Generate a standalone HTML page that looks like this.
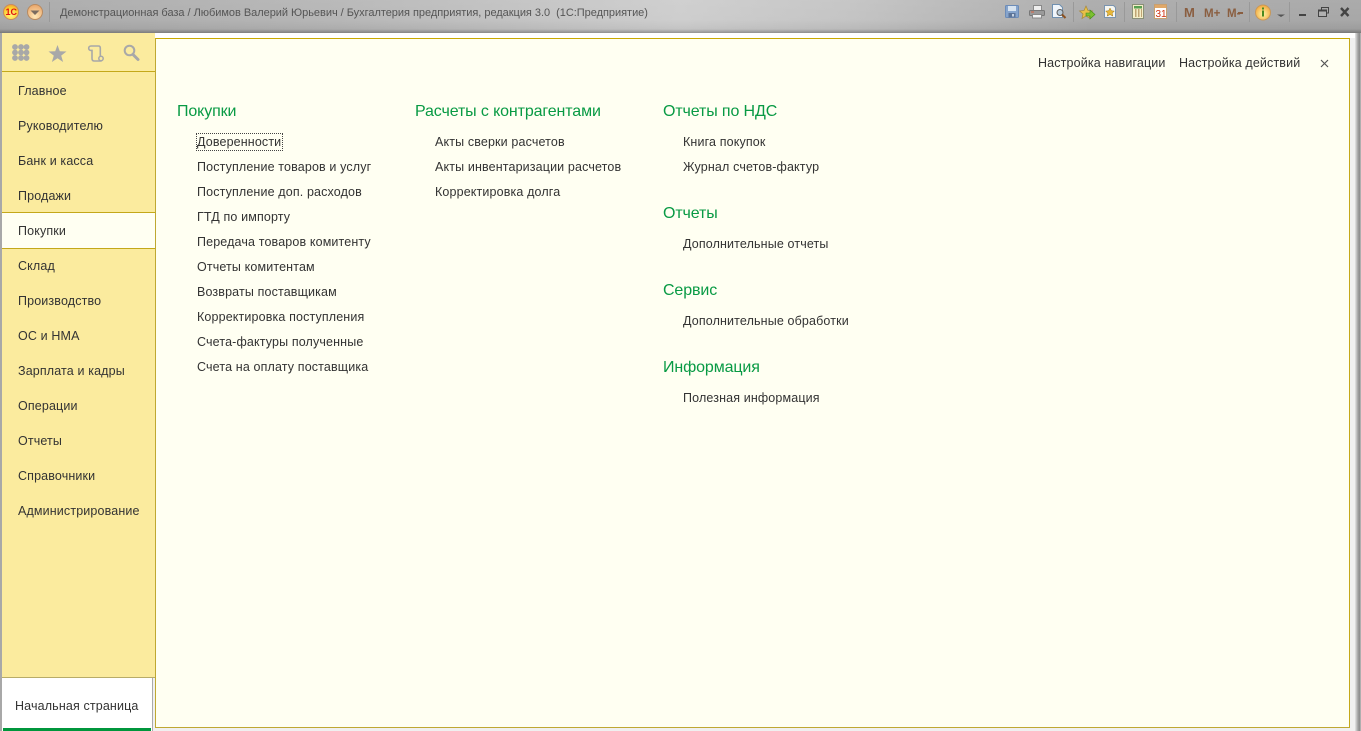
<!DOCTYPE html>
<html lang="ru"><head><meta charset="utf-8"><title>1С</title>
<style>
html,body{margin:0;padding:0;width:1361px;height:731px;overflow:hidden;background:#f0f0f0;font-family:"Liberation Sans",Arial,sans-serif}
.a{position:absolute;white-space:nowrap}
#top{left:0;top:0;width:1361px;height:33px;background:linear-gradient(90deg,#a6a6a6 0,#b4b4b4 25%,#cccccc 50%,#c2c2c2 62%,#a8a8a8 80%,#a4a4a4 100%)}
#topc{left:0;top:0;width:1361px;height:33px;background:linear-gradient(180deg,rgba(255,255,255,.08) 0,rgba(255,255,255,.04) 20px,rgba(0,0,0,.04) 29px,rgba(0,0,0,.28) 33px)}
#title{left:60px;top:6px;font-size:11px;line-height:14px;color:#555;letter-spacing:-.03px}
#lb{left:0;top:33px;width:2px;height:698px;background:#a8a8a8}
#rb{left:1355px;top:33px;width:6px;height:698px;background:linear-gradient(90deg,#e6e6e6,#a0a0a0 50%,#8c8c8c 80%,#c8c8c8)}
#white{left:155px;top:33px;width:1200px;height:5px;background:#fff}
#side{left:2px;top:33px;width:153px;height:644px;background:#fbeb9e;border-bottom:1px solid #b8ac68}
#sl{left:2px;top:71px;width:153px;height:1px;background:#c4a81a}
#act{left:2px;top:212px;width:153px;height:35px;background:#fffff2;border-top:1px solid #c4a81a;border-bottom:1px solid #c4a81a}
.n{left:18px;font-size:12.5px;line-height:16px;color:#333;letter-spacing:.14px}
#main{left:155px;top:38px;width:1193px;height:688px;background:#fffff2;border:1px solid #bfa832;border-top-color:#c8a800;border-right-color:#c4a81a}
#tab{left:2px;top:678px;width:150px;height:53px;background:#fff;border-right:1px solid #aaa}
#grn{left:3px;top:728px;width:148px;height:3px;background:#00963c}
.h{font-size:16px;line-height:20px;color:#089a44;letter-spacing:-.12px}
.l{font-size:12.5px;line-height:16px;color:#333;letter-spacing:.14px}
svg{position:absolute;overflow:visible}
</style></head><body>
<div class="a" id="top"></div><div class="a" id="topc"></div>
<div class="a" id="lb"></div><div class="a" id="rb"></div><div class="a" id="white"></div>
<div class="a" id="side"></div><div class="a" id="sl"></div>
<div class="a" id="main"></div><div class="a" id="act"></div>
<div class="a" id="tab"></div><div class="a" id="grn"></div>

<div class="a" id="title">Демонстрационная база / Любимов Валерий Юрьевич / Бухгалтерия предприятия, редакция 3.0&nbsp; (1С:Предприятие)</div>

<svg style="left:0;top:0" width="1361" height="33" viewBox="0 0 1361 33">
<defs>
<radialGradient id="y" cx=".5" cy=".7" r=".7"><stop offset="0" stop-color="#fff680"/><stop offset=".7" stop-color="#fcd030"/><stop offset="1" stop-color="#f0a030"/></radialGradient>
<radialGradient id="o" cx=".5" cy=".8" r=".8"><stop offset="0" stop-color="#ffe8b8"/><stop offset="1" stop-color="#e8a468"/></radialGradient>
<radialGradient id="i" cx=".5" cy=".6" r=".7"><stop offset="0" stop-color="#fff4a8"/><stop offset="1" stop-color="#f09a28"/></radialGradient>
</defs>
<circle cx="11" cy="12" r="7.500" fill="url(#y)" stroke="#c88a60"/>
<text x="5.500" y="15" font-family="Liberation Sans" font-size="9" font-weight="bold" fill="#e01010">1С</text>
<circle cx="35" cy="12" r="7.500" fill="url(#o)" stroke="#b88a60"/>
<path d="M30.500 10.500h9l-4.500 4.500z" fill="#7a6c60"/>
<rect x="49" y="2" width="1" height="20" fill="#999"/>
<!-- save -->
<rect x="1005.500" y="5.500" width="13" height="12" rx="1" fill="#86a4cc" stroke="#6c8cb8"/><rect x="1008" y="6" width="8" height="5" fill="#d8e4f0"/><rect x="1008.500" y="13" width="7" height="4.500" fill="#5c7498"/><rect x="1012" y="14" width="2" height="2.500" fill="#c8d4e4"/>
<!-- print -->
<rect x="1033.500" y="5.500" width="8" height="5" fill="#eeeeee" stroke="#8a8a8a"/><rect x="1029.500" y="10.500" width="15" height="5" rx="1" fill="#9a9a9a" stroke="#777"/><rect x="1032.500" y="14.500" width="9" height="3.500" fill="#f4f4f4" stroke="#888"/><rect x="1031" y="11.500" width="3" height="1" fill="#d86040"/>
<!-- preview -->
<path d="M1052.500 4.500h7l3 3v10h-10z" fill="#f0f5fa" stroke="#7090b0"/><circle cx="1060" cy="12.500" r="3" fill="#b8cad8" stroke="#5c5c5c"/><path d="M1062 14.500l3.500 3.500" stroke="#8a5020" stroke-width="2"/>
<rect x="1073" y="2" width="1" height="20" fill="#999"/>
<!-- fav go -->
<path d="M1086 6l2 4.500 4.500.5-3.500 3 1 4.500-4-2.500-4 2.500 1-4.500-3.500-3 4.500-.5z" fill="#e8c048" stroke="#a88838" stroke-width=".7"/><path d="M1086 13h4v-3l5 4.500-5 4.500v-3h-4z" fill="#7cc030" stroke="#408a18" stroke-width=".6"/>
<!-- fav doc -->
<path d="M1104.500 5.500h9l2 2v10h-11z" fill="#f6f6f0" stroke="#7a94b0"/><path d="M1110 8l1.400 2.800 3 .3-2.200 2 .6 3-2.800-1.500-2.800 1.500.6-3-2.200-2 3-.3z" fill="#e8b838" stroke="#a07820" stroke-width=".5"/>
<rect x="1124" y="2" width="1" height="20" fill="#999"/>
<!-- calc -->
<rect x="1132.500" y="4.500" width="11" height="14" fill="#f4eec8" stroke="#8a9078"/><rect x="1134" y="6" width="8" height="2.500" fill="#58a050"/><path d="M1135 10h1.500M1138 10h1.500M1141 10h1M1135 12h1.500M1138 12h1.500M1141 12h1M1135 14h1.500M1138 14h1.500M1141 14h1M1135 16h1.500M1138 16h1.500M1141 16h1" stroke="#8a5a20"/>
<!-- calendar -->
<rect x="1154.500" y="4.500" width="12" height="14" fill="#fff" stroke="#c8a070"/><rect x="1155" y="5" width="11" height="3" fill="#e0a868"/><text x="1155.500" y="17" font-family="Liberation Sans" font-size="10" fill="#d03010">31</text>
<rect x="1176" y="2" width="1" height="20" fill="#999"/>
<text x="1184" y="17" font-family="Liberation Sans" font-size="13" font-weight="bold" fill="#8a5e40">M</text>
<text x="1204" y="17" font-family="Liberation Sans" font-size="11.500" font-weight="bold" fill="#8a5e40">M+</text>
<text x="1227" y="17" font-family="Liberation Sans" font-size="11.500" font-weight="bold" fill="#8a5e40">M-</text>
<rect x="1238" y="12" width="5" height="2" fill="#8a5e40"/>
<rect x="1249" y="2" width="1" height="20" fill="#999"/>
<circle cx="1263" cy="12.500" r="7.500" fill="url(#i)" stroke="#c89858"/>
<rect x="1262" y="7.500" width="2" height="2" fill="#4a8a20"/><rect x="1262" y="10.500" width="2" height="6" fill="#4a8a20"/>
<path d="M1277 14.500h8l-4 2.500z" fill="#555"/>
<rect x="1289" y="2" width="1" height="20" fill="#999"/>
<rect x="1299" y="14" width="7" height="2" fill="#444"/>
<rect x="1321.500" y="7.500" width="7" height="5.500" fill="none" stroke="#444"/><rect x="1318.500" y="10" width="8" height="6.500" fill="#b0b0b0" stroke="#444"/><rect x="1318" y="9.500" width="9" height="2" fill="#444"/>
<path d="M1341 8l7.500 8M1348.500 8l-7.500 8" stroke="#444" stroke-width="2.400"/>
</svg>

<svg style="left:0;top:34px" width="156" height="38" viewBox="0 34 156 38">
<g fill="#a8a8a8"><circle cx="15" cy="47" r="2.900"/><circle cx="21" cy="47" r="2.900"/><circle cx="26.500" cy="47" r="2.900"/><circle cx="15" cy="52.500" r="2.900"/><circle cx="21" cy="52.500" r="2.900"/><circle cx="26.500" cy="52.500" r="2.900"/><circle cx="15" cy="58" r="2.900"/><circle cx="21" cy="58" r="2.900"/><circle cx="26.500" cy="58" r="2.900"/></g>
<path d="M57.500 45l2.300 6.300 6.700.2-5.300 4.100 1.900 6.400-5.600-3.800-5.600 3.800 1.900-6.400-5.300-4.100 6.700-.2z" fill="#a8a8a8"/>
<path d="M91 46h7.500c1.200 0 1.800.8 1.800 2v9M91 46c-1.500 0-2.300 1-2.300 2.200s.9 2.200 2.300 2.200h1v8c0 1.800 1 2.600 2.300 2.600h7.300" fill="none" stroke="#a8a8a8" stroke-width="1.600"/><circle cx="101" cy="58.500" r="2.200" fill="none" stroke="#a8a8a8" stroke-width="1.500"/>
<circle cx="129.500" cy="50.500" r="4.800" fill="none" stroke="#a8a8a8" stroke-width="2"/><path d="M133 54.500l5 5" stroke="#a8a8a8" stroke-width="3" stroke-linecap="round"/>
</svg>

<div class="a n" style="top:83px">Главное</div>
<div class="a n" style="top:118px">Руководителю</div>
<div class="a n" style="top:153px">Банк и касса</div>
<div class="a n" style="top:188px">Продажи</div>
<div class="a n" style="top:223px">Покупки</div>
<div class="a n" style="top:258px">Склад</div>
<div class="a n" style="top:293px">Производство</div>
<div class="a n" style="top:328px">ОС и НМА</div>
<div class="a n" style="top:363px">Зарплата и кадры</div>
<div class="a n" style="top:398px">Операции</div>
<div class="a n" style="top:433px">Отчеты</div>
<div class="a n" style="top:468px">Справочники</div>
<div class="a n" style="top:503px">Администрирование</div>
<div class="a n" style="left:15px;top:698px">Начальная страница</div>

<div class="a l" style="left:1038px;top:55px">Настройка навигации</div>
<div class="a l" style="left:1179px;top:55px">Настройка действий</div>
<svg style="left:1320px;top:59px" width="9" height="9"><path d="M1 1l7 7M8 1l-7 7" stroke="#555" stroke-width="1.200"/></svg>

<div class="a h" style="left:177px;top:102px">Покупки</div>
<div class="a l" style="left:197px;top:134px">Доверенности</div>
<div class="a" style="left:196px;top:133px;width:85px;height:16px;border:1px dotted #444"></div>
<div class="a l" style="left:197px;top:159px">Поступление товаров и услуг</div>
<div class="a l" style="left:197px;top:184px">Поступление доп. расходов</div>
<div class="a l" style="left:197px;top:209px">ГТД по импорту</div>
<div class="a l" style="left:197px;top:234px">Передача товаров комитенту</div>
<div class="a l" style="left:197px;top:259px">Отчеты комитентам</div>
<div class="a l" style="left:197px;top:284px">Возвраты поставщикам</div>
<div class="a l" style="left:197px;top:309px">Корректировка поступления</div>
<div class="a l" style="left:197px;top:334px">Счета-фактуры полученные</div>
<div class="a l" style="left:197px;top:359px">Счета на оплату поставщика</div>

<div class="a h" style="left:415px;top:102px">Расчеты с контрагентами</div>
<div class="a l" style="left:435px;top:134px">Акты сверки расчетов</div>
<div class="a l" style="left:435px;top:159px">Акты инвентаризации расчетов</div>
<div class="a l" style="left:435px;top:184px">Корректировка долга</div>

<div class="a h" style="left:663px;top:102px">Отчеты по НДС</div>
<div class="a l" style="left:683px;top:134px">Книга покупок</div>
<div class="a l" style="left:683px;top:159px">Журнал счетов-фактур</div>
<div class="a h" style="left:663px;top:204px">Отчеты</div>
<div class="a l" style="left:683px;top:236px">Дополнительные отчеты</div>
<div class="a h" style="left:663px;top:281px">Сервис</div>
<div class="a l" style="left:683px;top:313px">Дополнительные обработки</div>
<div class="a h" style="left:663px;top:358px">Информация</div>
<div class="a l" style="left:683px;top:390px">Полезная информация</div>
</body></html>
